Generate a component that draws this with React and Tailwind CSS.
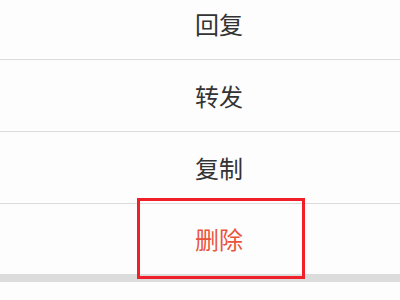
import React from 'react'

const items = ['回复', '转发', '复制']

export default function App() {
  return (
    <div
      className="w-[400px] h-[300px] overflow-hidden bg-[#fdfdfd]"
      style={{ fontFamily: '"Noto Sans CJK SC", "Noto Sans", sans-serif' }}
    >
      <div className="-mt-[12px] pl-[38px]">
        {items.map((t) => (
          <div
            key={t}
            className="h-[72px] flex items-center justify-center border-b border-[#dcdcdc] -ml-[38px] pl-[38px] text-[24px] text-[#333333]"
          >
            {t}
          </div>
        ))}

        {/* delete row with highlight box */}
        <div className="relative h-[70px] -ml-[38px] pl-[38px] flex items-center justify-center text-[24px] text-[#e8553d]">
          删除
          <div className="absolute left-[137px] top-[-6px] w-[168px] h-[81px] border-[3px] border-[#f0202a] z-10" />
        </div>
      </div>

      {/* bottom gap */}
      <div className="h-[8px] bg-[#dcdcdc]" />
      <div className="h-[20px] bg-[#fdfdfd]" />
    </div>
  )
}
